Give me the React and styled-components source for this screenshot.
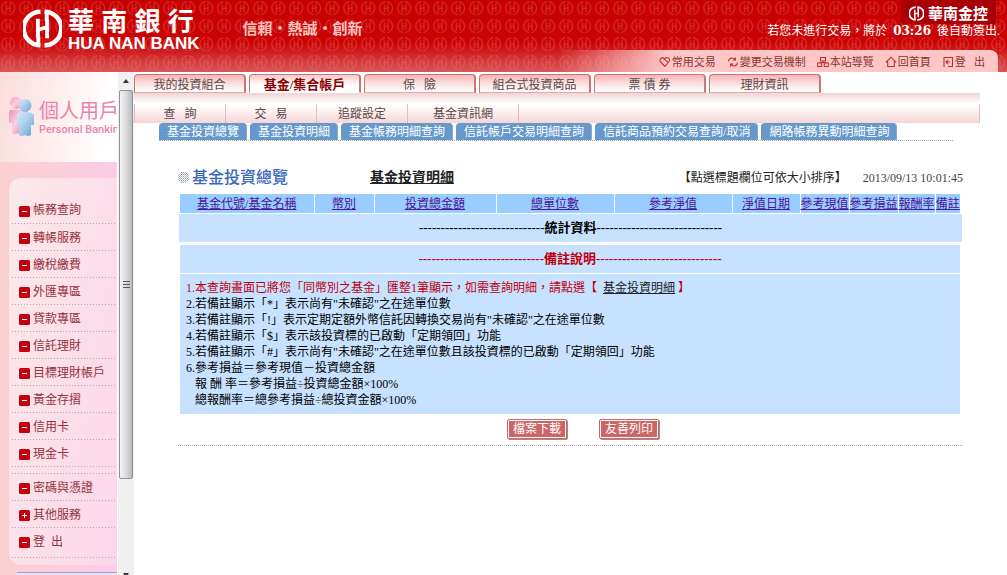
import React from 'react'
import styled, { createGlobalStyle } from 'styled-components'

const GlobalStyle = createGlobalStyle`
* { box-sizing:border-box; }
body {
margin:0;
background:#fff;
font-family:'Liberation Serif','Noto Sans CJK TC',serif;
font-size:12px;
line-height:16px;
color:#000;
}
ul, ol { margin:0; padding:0; list-style:none; }
h1, h2, p { margin:0; font-weight:normal; }
a { color:inherit; text-decoration:none; }
`

const Page = styled.div`
display:flex;
flex-direction:column;
height:100vh;
overflow:hidden;
`

/* ---- header ---- */

const TopBar = styled.header`
position:relative;
display:flex;
justify-content:space-between;
flex-shrink:0;
height:72px;
background:linear-gradient(#c60000 0, #cb0406 60%, #d9585a 100%);
`
const PatternLayer = styled.svg`
position:absolute;
inset:0;
width:100%;
height:100%;
`
const Brand = styled.div`
position:relative;
display:flex;
align-items:flex-start;
padding:9px 0 0 23px;
color:#fff;
`
const BrandNames = styled.div`
padding-left:6px;
font-family:'Liberation Sans','Noto Sans CJK TC',sans-serif;
font-weight:bold;
`
const BrandName = styled.h1`
font-size:26px;
line-height:26px;
font-weight:bold;
`
const BrandLatin = styled.p`
font-size:17px;
line-height:18px;
font-weight:bold;
`
const Slogan = styled.p`
padding:11px 0 0 43px;
font-family:'Noto Sans CJK TC',sans-serif;
font-size:15px;
font-weight:bold;
color:#ffc4c0;
`
const TopRight = styled.div`
position:relative;
display:flex;
flex-direction:column;
align-items:flex-end;
flex-grow:1;
padding-right:9px;
`
const Group = styled.div`
display:flex;
align-items:center;
gap:4px;
height:24px;
margin-right:2px;
padding:2px 8px 0 8px;
background:#a80006;
border-radius:0 0 3px 3px;
color:#fff;
font-family:'Noto Sans CJK TC',sans-serif;
font-size:15px;
font-weight:bold;
`
const Countdown = styled.p`
margin-right:-2px;
line-height:14px;
color:#fff;
`
const Clock = styled.strong`
padding:0 3px;
font-family:'DejaVu Serif','Liberation Serif',serif;
font-size:12px;
`
const Tools = styled.nav`
display:flex;
justify-content:flex-end;
align-items:center;
gap:11px;
width:440px;
height:22px;
margin-top:auto;
padding:2px 13px 0 0;
border-radius:0 8px 0 0;
background:linear-gradient(90deg, rgba(255,200,200,0), #ffc6c6 25%);
`
const ToolLink = styled.a`
display:flex;
align-items:center;
gap:1px;
font-size:11px;
color:#8a3434;
svg { color:#c03030; }
`

/* ---- left menu ---- */

const Body = styled.div`
display:flex;
flex:1;
min-height:0;
`
const Side = styled.aside`
width:118px;
flex-shrink:0;
overflow:hidden;
border-right:1px solid #fff;
background:linear-gradient(90deg, #fbd0d0, #fdcbe8);
`
const SideTitle = styled.div`
display:flex;
align-items:center;
gap:4px;
height:90px;
padding-left:8px;
white-space:nowrap;
background:linear-gradient(100deg, #fcdcdc, #fff 90%);
color:#ee82ae;
svg { flex-shrink:0; }
`
const SideName = styled.h2`
padding-bottom:1px;
font-family:'Noto Sans CJK TC',sans-serif;
font-size:20px;
line-height:24px;
`
const SideLatin = styled.p`
font-family:Roboto,sans-serif;
font-size:11px;
font-weight:500;
line-height:14px;
`
const Panel = styled.ul`
margin:16px 0 0 9px;
padding:18px 2px 7px 3px;
border-radius:12px 0 0 12px;
background:linear-gradient(100deg, #fce9ea, #fbd6ea);
`
const PanelItem = styled.li`
display:flex;
align-items:center;
height:${props => props.$last ? '30px' : props.$first ? '28px' : '27px'};
padding:0 0 ${props => props.$last ? '3px' : '0'} 7px;
background:repeating-linear-gradient(90deg, #cf9ca4 0 1px, transparent 1px 3px) bottom / 100% 1px no-repeat;
color:#98323a;
a { display:flex; align-items:center; gap:3px; }
svg { position:relative; top:1px; }
`
const PanelGap = styled.li`
height:7px;
background:repeating-linear-gradient(90deg, #cf9ca4 0 1px, transparent 1px 3px) bottom / 100% 1px no-repeat;
`
const SideFoot = styled.div`
margin:7px 0 0 17px;
height:9px;
border-top:1px solid #9aa0d8;
background:#e8e4f4;
`

/* ---- scroll track between the menu and the content ---- */

const Track = styled.div`
display:flex;
flex-direction:column;
align-items:center;
justify-content:space-between;
flex-shrink:0;
width:16px;
padding:7px 0 0;
background:#f0f0f0;
`
const Thumb = styled.div`
display:flex;
align-items:center;
justify-content:center;
width:14px;
height:389px;
margin:7px 0 auto;
border:1px solid #8f9194;
border-radius:2px;
background:linear-gradient(90deg, #f4f4f4, #dcdcde 50%, #b9babd);
`

/* ---- content ---- */

const Main = styled.main`
flex:1;
min-width:0;
overflow:hidden;
`
const Tabs = styled.nav`
display:flex;
gap:3px;
padding-top:2px;
`
const Tab = styled.a`
width:112px;
height:19px;
border:1px solid #cc7478;
border-width:1px 2px 1px 1px;
border-bottom-color:${props => props.$active ? '#fff' : '#e8a8a8'};
border-radius:4px 4px 0 0;
background:${props => props.$active ? 'linear-gradient(#f9c8c8, #fff 60%)' : 'linear-gradient(#f8b4b4, #fbe8e8 60%, #fff)'};
color:${props => props.$active ? '#8b0000' : '#5c4848'};
font-size:${props => props.$active ? '13px' : '12px'};
font-weight:${props => props.$active ? 'bold' : 'normal'};
line-height:20px;
text-align:center;
white-space:nowrap;
`
const SubNav = styled.nav`
display:flex;
align-items:flex-end;
height:30px;
margin-right:27px;
background:linear-gradient(#efd4d4, #fff 35%, #fff 40%, #f6d6d6);
`
const SubLink = styled.a`
width:${props => props.$wide ? '111px' : '91px'};
height:19px;
border-left:1px solid #e8baba;
line-height:21px;
text-align:center;
color:#5c4848;
`
const SubEnd = styled.span`
flex-grow:1;
height:19px;
border:solid #e8baba;
border-width:0 1px;
`
const Leaves = styled.nav`
display:flex;
gap:3px;
margin:0 54px 0 25px;
border-bottom:1px dotted #aaa;
`
const Leaf = styled.a`
height:17px;
padding:0 7px 0 8px;
border-right:1px solid #86a9cc;
border-radius:4px 4px 0 0;
background:#6699cb;
color:#fff;
line-height:18px;
white-space:nowrap;
`
const Content = styled.section`
margin:0 44px;
border-bottom:1px dotted #aaa;
`
const TitleRow = styled.div`
display:flex;
align-items:center;
height:53px;
padding-top:20px;
`
const PageTitle = styled.h2`
display:flex;
align-items:center;
gap:3px;
width:192px;
font-size:16px;
font-weight:500;
color:#3a68b8;
`
const DetailLink = styled.a`
font-size:14px;
font-weight:bold;
text-decoration:underline;
color:#222;
`
const SortHint = styled.p`
margin-left:auto;
color:#222;
`
const Stamp = styled.time`
padding-left:16px;
color:#444;
`
const FundTable = styled.table`
width:calc(100% - 5px);
margin-left:2px;
table-layout:fixed;
border-collapse:collapse;
`
const Head = styled.th`
height:19px;
padding:0;
border-left:${props => props.$first ? '0' : '1px solid #fff'};
background:#99ccff;
font-weight:normal;
line-height:18px;
white-space:nowrap;
a { color:#4b1496; text-decoration:underline; }
`
const Band = styled.div`
margin:${props => props.$note ? '3px 3px 1px 2px' : '1px 1px 0 1px'};
height:28px;
background:#c6e2ff;
color:${props => props.$note ? '#c00010' : '#000'};
font-size:13px;
font-weight:bold;
line-height:28px;
text-align:center;
`
const Notes = styled.ol`
margin:0 3px 0 2px;
padding:6px 6px 6px;
background:#c6e2ff;
`
const Note = styled.li`
padding-left:${props => props.$indent ? '9px' : '0'};
color:${props => props.$alert ? '#c00010' : '#000'};
a { color:#222; text-decoration:underline; }
`
const Actions = styled.div`
display:flex;
justify-content:center;
gap:32px;
padding:5px 0 6px 25px;
`
const Action = styled.button`
width:60px;
height:20px;
padding:0;
border:1px solid #c66;
border-radius:2px;
outline:0;
background:#cc6666;
box-shadow:inset 0 0 0 1px #fff, 1px 1px 0 #a88;
color:#fff;
font:inherit;
line-height:16px;
cursor:pointer;
`

const Nb = '\u00a0'
const dashes = '-'.repeat(29)

const tabs = ['我的投資組合', '基金/集合帳戶', `保${Nb}${Nb}${Nb}險`, '組合式投資商品', '票 債 券', '理財資訊']
const subLinks = [`查${Nb}${Nb}${Nb}詢`, `交${Nb}${Nb}${Nb}易`, '追蹤設定', '基金資訊網']
const leaves = ['基金投資總覽', '基金投資明細', '基金帳務明細查詢', '信託帳戶交易明細查詢', '信託商品預約交易查詢/取消', '網路帳務異動明細查詢']
const menu = ['帳務查詢', '轉帳服務', '繳稅繳費', '外匯專區', '貸款專區', '信託理財', '目標理財帳戶', '黃金存摺', '信用卡', '現金卡']
const columns = [
    { name: '基金代號/基金名稱', width: 134 },
    { name: '幣別', width: 60 },
    { name: '投資總金額', width: 122 },
    { name: '總單位數', width: 118 },
    { name: '參考淨值', width: 118 },
    { name: '淨值日期', width: 68 },
    { name: '參考現值', width: 49 },
    { name: '參考損益', width: 49 },
    { name: '報酬率', width: 37 },
    { name: '備註', width: 25 },
]
const notes = [
    { text: '2.若備註顯示「*」表示尚有"未確認"之在途單位數' },
    { text: '3.若備註顯示「!」表示定期定額外幣信託因轉換交易尚有"未確認"之在途單位數' },
    { text: '4.若備註顯示「$」表示該投資標的已啟動「定期領回」功能' },
    { text: '5.若備註顯示「#」表示尚有"未確認"之在途單位數且該投資標的已啟動「定期領回」功能' },
    { text: '6.參考損益＝參考現值－投資總金額' },
    { text: '報 酬 率＝參考損益÷投資總金額×100%', indent: true },
    { text: '總報酬率＝總參考損益÷總投資金額×100%', indent: true },
]

function Mark({ size }) {
    return (
        <svg width={size} height={size} viewBox="0 0 38 38" fill="none" stroke="currentColor" strokeWidth="4.400" aria-hidden="true">
            <path d="M17 2.700A16.300 16.300 0 0 0 17 35.300" />
            <path d="M21 35.300A16.300 16.300 0 0 0 21 2.700" />
            <path d="M14.500 9.500V28M14.900 35.300V26M23.500 28.500V10M23.100 2.700V12" strokeWidth="3.800" />
            <path d="M14 20.500l10-3" strokeWidth="3.400" />
        </svg>
    )
}

function Pattern() {
    return (
        <PatternLayer aria-hidden="true">
            <defs>
                <pattern id="marks" width="18" height="18" patternUnits="userSpaceOnUse">
                    <g fill="none" stroke="#ff9c90" strokeOpacity=".24" strokeWidth="1.400">
                        <path d="M7.200 1.800A6.500 6.500 0 0 0 7.200 14.600M9.200 14.600A6.500 6.500 0 0 0 9.200 1.800" />
                        <path d="M6.400 4.500V12.500M10 4V12M6.400 8.800l3.600-1.200" />
                    </g>
                </pattern>
            </defs>
            <rect width="100%" height="100%" fill="url(#marks)" />
        </PatternLayer>
    )
}

function ToolIcon({ name }) {
    const paths = {
        heart: 'M6 10.5L1.5 6C-.2 3.4 2.6.6 5 2.5L7 4.6M5.3 3C7 .6 11 1.4 10.6 4.6L6 10.5M7 4.6L8.6 6',
        refresh: 'M1.500 5.500C1.500 2.500 5 1 7.500 3M10.500 6.500C10.500 9.500 7 11 4.500 9',
        map: 'M3.5 1.5h5v3.500h-5zM.7 7h4v3.500h-4zM7.300 7h4v3.500h-4zM6 5v1.500M2.500 6.500h7',
        home: 'M.8 6.500L6 1.200l5.200 5.300M2.700 5.500V10.500H9.300V5.500',
        exit: 'M2 11V1.500h8.500v9H8M4 6h4M6 4L4 6l2 2M6 10.500h3',
    }
    return (
        <svg width="12" height="12" viewBox="0 0 12 12" fill="none" stroke="currentColor" strokeWidth="1.100" aria-hidden="true">
            <path d={paths[name]} />
            {name === 'refresh' && <path d="M9 1v3.500H5.500zM3 11V7.500h3.500z" fill="currentColor" stroke="none" />}
        </svg>
    )
}

function Bullet({ plus }) {
    return (
        <svg width="11" height="11" viewBox="0 0 11 11" aria-hidden="true">
            <rect width="11" height="11" rx="1.500" fill="#c4000c" />
            <path d={plus ? 'M3 5.500h5M5.500 3v5' : 'M3 5.500h5'} stroke="#fff" />
        </svg>
    )
}

function People() {
    return (
        <svg width="27" height="42" viewBox="0 0 27 42" aria-hidden="true">
            <defs>
                <linearGradient id="rose" x2="1" y2="1">
                    <stop offset="0" stopColor="#f490bc" />
                    <stop offset=".5" stopColor="#fbd0e2" />
                    <stop offset="1" stopColor="#e778ae" />
                </linearGradient>
                <linearGradient id="sky" x2="1" y2="1">
                    <stop offset="0" stopColor="#d8ecf8" />
                    <stop offset=".5" stopColor="#a6cdea" />
                    <stop offset="1" stopColor="#6aa2d4" />
                </linearGradient>
            </defs>
            <g fill="url(#rose)">
                <circle cx="8" cy="7" r="6" />
                <path d="M2 14h14v23q-3 2-6 0q-3 2-6 0V27H1V16z" />
            </g>
            <g fill="url(#sky)">
                <circle cx="17" cy="9.500" r="6.500" />
                <path d="M10 17q7-2 14 0q2 1 2 3v9h-3v10q-3 2-6 0q-3 2-6 0V29H9v-9q-1-2 1-3z" />
            </g>
        </svg>
    )
}

function TitleMark() {
    return (
        <svg width="11" height="11" viewBox="0 0 11 11" fill="none" stroke="#8aa0bc" aria-hidden="true">
            <path strokeDasharray="1 1" d="M3 .5h6M1 2.500h10M1 4.500h10M1 6.500h10M1 8.500h10M3 10.500h6" />
            <path strokeDasharray="1 1" strokeOpacity=".6" d="M2 1.500h8M0 3.500h11M0 5.500h11M0 7.500h11M2 9.500h8" />
        </svg>
    )
}

function Header() {
    return (
        <TopBar>
            <Pattern />
            <Brand>
                <Mark size={39} />
                <BrandNames>
                    <BrandName>華 南 銀 行</BrandName>
                    <BrandLatin>HUA NAN BANK</BrandLatin>
                </BrandNames>
                <Slogan>信賴・熱誠・創新</Slogan>
            </Brand>
            <TopRight>
                <Group><Mark size={15} />華南金控</Group>
                <Countdown>若您未進行交易，將於 <Clock>03:26</Clock> 後自動簽出.</Countdown>
                <Tools>
                    <ToolLink href="#favorites"><ToolIcon name="heart" />常用交易</ToolLink>
                    <ToolLink href="#change"><ToolIcon name="refresh" />變更交易機制</ToolLink>
                    <ToolLink href="#sitemap"><ToolIcon name="map" />本站導覽</ToolLink>
                    <ToolLink href="#home"><ToolIcon name="home" />回首頁</ToolLink>
                    <ToolLink href="#logout"><ToolIcon name="exit" />登{Nb}{Nb}{Nb}出</ToolLink>
                </Tools>
            </TopRight>
        </TopBar>
    )
}

function SideMenu() {
    return (
        <Side>
            <SideTitle>
                <People />
                <div>
                    <SideName>個人用戶</SideName>
                    <SideLatin>Personal Banking</SideLatin>
                </div>
            </SideTitle>
            <Panel>
                {menu.map((item, i) => (
                    <PanelItem key={item} $first={i === 0}><a href="#menu"><Bullet />{item}</a></PanelItem>
                ))}
                <PanelGap />
                <PanelItem><a href="#menu"><Bullet />密碼與憑證</a></PanelItem>
                <PanelItem><a href="#menu"><Bullet plus />其他服務</a></PanelItem>
                <PanelItem $last><a href="#logout"><Bullet />登{Nb}{Nb}出</a></PanelItem>
            </Panel>
            <SideFoot />
        </Side>
    )
}

function ScrollTrack() {
    return (
        <Track aria-hidden="true">
            <svg width="6" height="4" viewBox="0 0 6 4"><path d="M0 4L3 0l3 4z" fill="#333" /></svg>
            <Thumb>
                <svg width="7" height="8" viewBox="0 0 7 8" stroke="#555"><path d="M0 .5h7M0 3.500h7M0 6.500h7" /></svg>
            </Thumb>
            <svg width="6" height="2" viewBox="0 0 6 2"><path d="M0 0h6L4.500 2h-3z" fill="#333" /></svg>
        </Track>
    )
}

function App() {
    return (
        <Page>
            <GlobalStyle />
            <Header />
            <Body>
                <SideMenu />
                <ScrollTrack />
                <Main>
                    <Tabs>
                        {tabs.map((tab, i) => <Tab key={tab} href="#tab" $active={i === 1}>{tab}</Tab>)}
                    </Tabs>
                    <SubNav>
                        {subLinks.map((link, i) => <SubLink key={link} href="#sub" $wide={i === 3}>{link}</SubLink>)}
                        <SubEnd />
                    </SubNav>
                    <Leaves>
                        {leaves.map(leaf => <Leaf key={leaf} href="#leaf">{leaf}</Leaf>)}
                    </Leaves>
                    <Content>
                        <TitleRow>
                            <PageTitle><TitleMark />基金投資總覽</PageTitle>
                            <DetailLink href="#detail">基金投資明細</DetailLink>
                            <SortHint>【點選標題欄位可依大小排序】</SortHint>
                            <Stamp>2013/09/13 10:01:45</Stamp>
                        </TitleRow>
                        <FundTable>
                            <colgroup>
                                {columns.map(({ name, width }) => <col key={name} width={width} />)}
                            </colgroup>
                            <thead>
                                <tr>
                                    {columns.map(({ name }, i) => (
                                        <Head key={name} $first={i === 0}><a href="#sort">{name}</a></Head>
                                    ))}
                                </tr>
                            </thead>
                        </FundTable>
                        <Band>{dashes}統計資料{dashes}</Band>
                        <Band $note>{dashes}備註說明{dashes}</Band>
                        <Notes>
                            <Note $alert>
                                1.本查詢畫面已將您「同幣別之基金」匯整1筆顯示，如需查詢明細，請點選【{Nb} <a href="#detail">基金投資明細</a> 】
                            </Note>
                            {notes.map(({ text, indent }) => <Note key={text} $indent={indent}>{text}</Note>)}
                        </Notes>
                        <Actions>
                            <Action type="button">檔案下載</Action>
                            <Action type="button">友善列印</Action>
                        </Actions>
                    </Content>
                </Main>
            </Body>
        </Page>
    )
}

export default App
